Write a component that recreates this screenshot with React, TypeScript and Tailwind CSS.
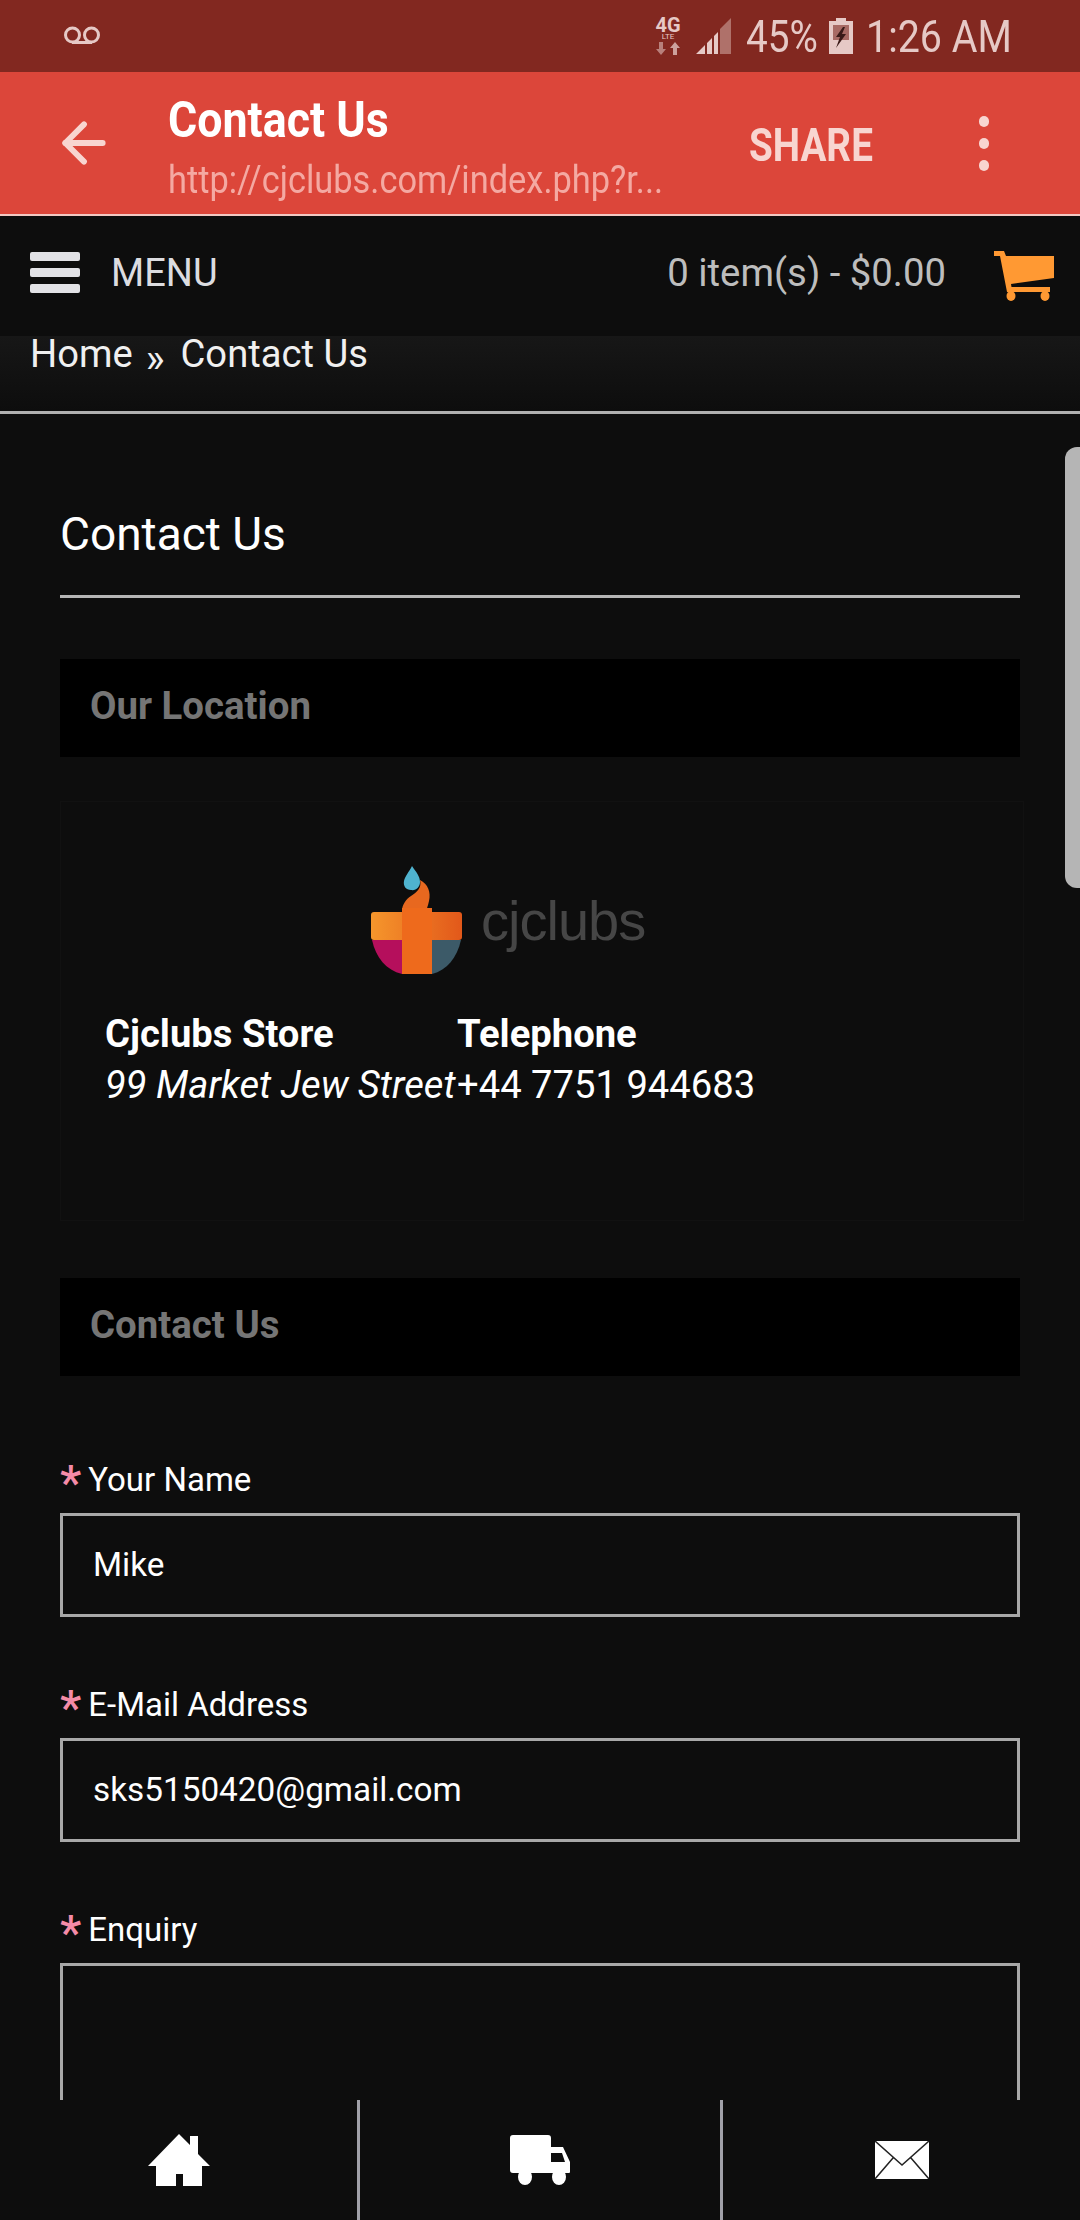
import { ArrowLeft } from 'lucide-react';

const font = { fontFamily: 'Roboto, sans-serif' };

function StatusBar() {
  return (
    <div className="h-[72px] bg-[#822820] flex items-center pl-[63px] pr-[70px] text-[#e6c9c6]">
      <svg width="38" height="20" viewBox="0 0 38 20" fill="none" stroke="#e6c9c6" strokeWidth="3">
        <circle cx="9.500" cy="9" r="7" />
        <circle cx="28.500" cy="9" r="7" />
        <path d="M9 16.500h20" />
      </svg>
      <div className="ml-auto flex items-center">
        <div className="w-[28px] flex flex-col items-center">
          <div className="h-[15px] leading-[15px] text-[20px] font-bold">4G</div>
          <div className="h-[7px] leading-[7px] text-[8px] overflow-visible">LTE</div>
          <svg className="mt-[2px]" width="24" height="13" viewBox="0 0 24 13" fill="#e6c9c6">
            <path d="M3 0h4v7h3l-5 6-5-6h3z" opacity=".55" />
            <path d="M17 13V6h-3l5-6 5 6h-3v7z" opacity=".75" />
          </svg>
        </div>
        <svg className="ml-[14px]" width="36" height="36" viewBox="0 0 36 36">
          <path d="M35 0v36H24V11z" fill="#e6c9c6" opacity=".45" />
          <path d="M0 36l9-9v9zM11 25l5-5v16h-5zM18 18l4-4v22h-4z" fill="#e6c9c6" />
        </svg>
        <span className="ml-[14px] w-[70px] text-[45px] leading-none origin-left scale-x-[0.86] whitespace-nowrap">45%</span>
        <svg className="ml-[13px]" width="24" height="36" viewBox="0 0 24 36">
          <path d="M7 0h10v3h7v33H0V3h7z" fill="#e6c9c6" />
          <path d="M4 7h16v15H4z" fill="#a86a64" />
          <path d="M14 9l-7 10h4l-4 11 10-14h-4l3-7z" fill="#3a1a18" />
        </svg>
        <span className="ml-[13px] w-[144px] text-[45px] leading-none origin-left scale-x-[0.875] whitespace-nowrap">1:26 AM</span>
      </div>
    </div>
  );
}

function AppBar() {
  return (
    <div className="h-[144px] bg-[#dc463a] border-b-2 border-[#f2c8c2] flex items-center relative">
      <ArrowLeft className="ml-[52px] text-[#f8d5d0]" size={64} strokeWidth={2.2} />
      <div className="ml-[52px] w-[500px] pt-[9px]">
        <div className="text-[50px] leading-[54px] font-bold text-white origin-left scale-x-[0.895] whitespace-nowrap">Contact Us</div>
        <div className="text-[38px] leading-[46px] mt-[10px] text-[#f4a9a2] origin-left scale-x-[0.905] whitespace-nowrap">http://cjclubs.com/index.php?r...</div>
      </div>
      <div className="absolute left-[749px] top-[46px] text-[46px] leading-[54px] font-bold text-[#f8d5d0] origin-left scale-x-[0.84]">SHARE</div>
      <div className="absolute left-[979px] flex flex-col gap-[11px]">
        <span className="w-[10px] h-[11px] rounded-full bg-[#f8d5d0]" />
        <span className="w-[10px] h-[11px] rounded-full bg-[#f8d5d0]" />
        <span className="w-[10px] h-[11px] rounded-full bg-[#f8d5d0]" />
      </div>
    </div>
  );
}

function MenuBar() {
  return (
    <div className="h-[120px] bg-[#0d0d0d] flex items-center pl-[30px] pr-[26px]">
      <div className="w-[50px] flex flex-col gap-[7px] mb-[8px]">
        <span className="h-[9px] rounded-[2px] bg-[#e2e2e6]" />
        <span className="h-[9px] rounded-[2px] bg-[#e2e2e6]" />
        <span className="h-[9px] rounded-[2px] bg-[#e2e2e6]" />
      </div>
      <span className="ml-[31px] mb-[6px] text-[38px] leading-[50px] text-[#dcdce0]">MENU</span>
      <span className="ml-auto mb-[6px] text-[38.300px] leading-[50px] text-[#bdbdbd]">0 item(s) - $0.00</span>
      <svg className="ml-[48px]" width="60" height="50" viewBox="0 0 60 50" fill="#ff9933">
        <path d="M0 0h10l2 5h48v22l-43 6 .5 3H56v5H13L6 5H0z" />
        <ellipse cx="17" cy="45" rx="4.500" ry="5" />
        <ellipse cx="51" cy="45" rx="4.500" ry="5" />
      </svg>
    </div>
  );
}

function SectionBar({ title }: { title: string }) {
  return (
    <div className="h-[98px] bg-black flex items-center pl-[30px] pb-[4px] text-[38.400px] font-bold text-[#757575]">{title}</div>
  );
}

function Field({ label, value, textarea }: { label: string; value?: string; textarea?: boolean }) {
  return (
    <div className="mb-[70px]">
      <div className="h-[33px] pt-[2px] flex items-center text-[33px] leading-none text-white">
        <span className="text-[#f48ba8] text-[48px] font-medium leading-none h-[33px] -mt-[8px] mr-[7px]">*</span>
        {label}
      </div>
      <div className={`mt-[18px] border-[3px] border-[#a8a8a8] pl-[30px] flex items-center text-[33.300px] text-white ${textarea ? 'h-[240px]' : 'h-[104px]'}`}>
        {value}
      </div>
    </div>
  );
}

function Logo() {
  return (
    <div className="flex items-center pl-[308px] pt-[64px]">
      <svg className="blur-[0.6px]" width="95" height="110" viewBox="0 0 95 110">
        <defs>
          <linearGradient id="bar" x1="0" x2="1" y1="0" y2="0">
            <stop offset="0" stopColor="#f5962c" />
            <stop offset="1" stopColor="#e2581a" />
          </linearGradient>
        </defs>
        <path d="M43 0c4 6 8 10 8 16 0 5-4 9-9 8-5 0-8-4-7-9 1-5 5-9 8-15z" fill="#4fb3cf" />
        <path d="M51 14c8 4 11 12 9 21-1 5-3 10-3 10H33c0-6 4-12 9-15 6-4 11-8 9-16z" fill="#e8681f" />
        <path d="M3 74h30v34C17 104 7 92 3 74z" fill="#b50f5c" />
        <path d="M63 74h29c-4 18-14 30-29 34z" fill="#3c5a68" />
        <rect x="2" y="46" width="91" height="28" rx="3" fill="url(#bar)" />
        <path d="M33 42h30v66H33z" fill="#ee6a1c" />
      </svg>
      <span className="ml-[17px] text-[56px] leading-none tracking-[-1px] blur-[0.7px] text-[#464646]" style={{ fontFamily: '"Liberation Sans", sans-serif' }}>cjclubs</span>
    </div>
  );
}

export default function App() {
  return (
    <div className="relative w-[1080px] h-[2220px] overflow-hidden bg-[#0d0d0d]" style={font}>
      <StatusBar />
      <AppBar />
      <MenuBar />

      <div className="h-[78px] border-b-[3px] border-[#b0b0b0] bg-gradient-to-b from-[#171717] to-[#0d0d0d] pl-[30px] text-[38.200px] leading-[36px] text-[#f0f0f0]">
        Home<span className="ml-[13px] mr-[16px] text-[40px] align-[-5px]">»</span>Contact Us
      </div>

      <div className="px-[60px]">
        <div className="pt-[90px] pb-[34px] border-b-[3px] border-[#b5b5b5] text-[46px] leading-[60px] text-white h-[184px]">Contact Us</div>

        <div className="mt-[61px]">
          <SectionBar title="Our Location" />
        </div>

        <div className="mt-[44px] h-[420px] w-[964px] border border-[#111111]">
          <Logo />
          <div className="mt-[33px] pl-[44px] flex text-[38.200px] leading-[51px] text-white">
            <div className="w-[352px]">
              <div className="font-bold">Cjclubs Store</div>
              <div className="italic whitespace-nowrap">99 Market Jew Street</div>
            </div>
            <div>
              <div className="font-bold">Telephone</div>
              <div>+44 7751 944683</div>
            </div>
          </div>
        </div>

        <div className="mt-[57px]">
          <SectionBar title="Contact Us" />
        </div>

        <div className="mt-[86px]">
          <Field label="Your Name" value="Mike" />
          <Field label="E-Mail Address" value="sks5150420@gmail.com" />
          <Field label="Enquiry" textarea />
        </div>
      </div>

      {/* scrollbar overlay */}
      <div className="absolute right-0 top-[447px] w-[15px] h-[441px] bg-[#b5b5b5] rounded-l-[12px]" />

      {/* fixed bottom nav */}
      <div className="absolute left-0 right-0 bottom-0 h-[120px] bg-[#0d0d0d] flex">
        <div className="w-[360px] flex items-center justify-center border-r-[3px] border-[#a0a0a8]">
          <svg width="62" height="52" viewBox="0 0 62 52" fill="white">
            <path d="M31 0l11 11V2h8v18l12 12h-8v20H35V40h-7v12H8V32H0z" />
          </svg>
        </div>
        <div className="w-[363px] flex items-center justify-center border-r-[3px] border-[#a0a0a8]">
          <svg width="60" height="50" viewBox="0 0 60 50" fill="white">
            <path d="M3 0h35a3 3 0 0 1 3 3v9h12l7 15v10a1 1 0 0 1-1 1H3a3 3 0 0 1-3-3V3a3 3 0 0 1 3-3z" />
            <path d="M41 18h11l3 9H41z" fill="#0d0d0d" />
            <ellipse cx="15" cy="42" rx="7" ry="8" />
            <ellipse cx="49" cy="42" rx="7" ry="8" />
          </svg>
        </div>
        <div className="flex-1 flex items-center justify-center">
          <svg width="54" height="38" viewBox="0 0 54 38">
            <path d="M0 0h54v38H0z" fill="white" />
            <path d="M0 0l27 24L54 0M0 38l18-21M54 38L36 17" fill="none" stroke="#222" strokeWidth="1.500" />
          </svg>
        </div>
      </div>
    </div>
  );
}
